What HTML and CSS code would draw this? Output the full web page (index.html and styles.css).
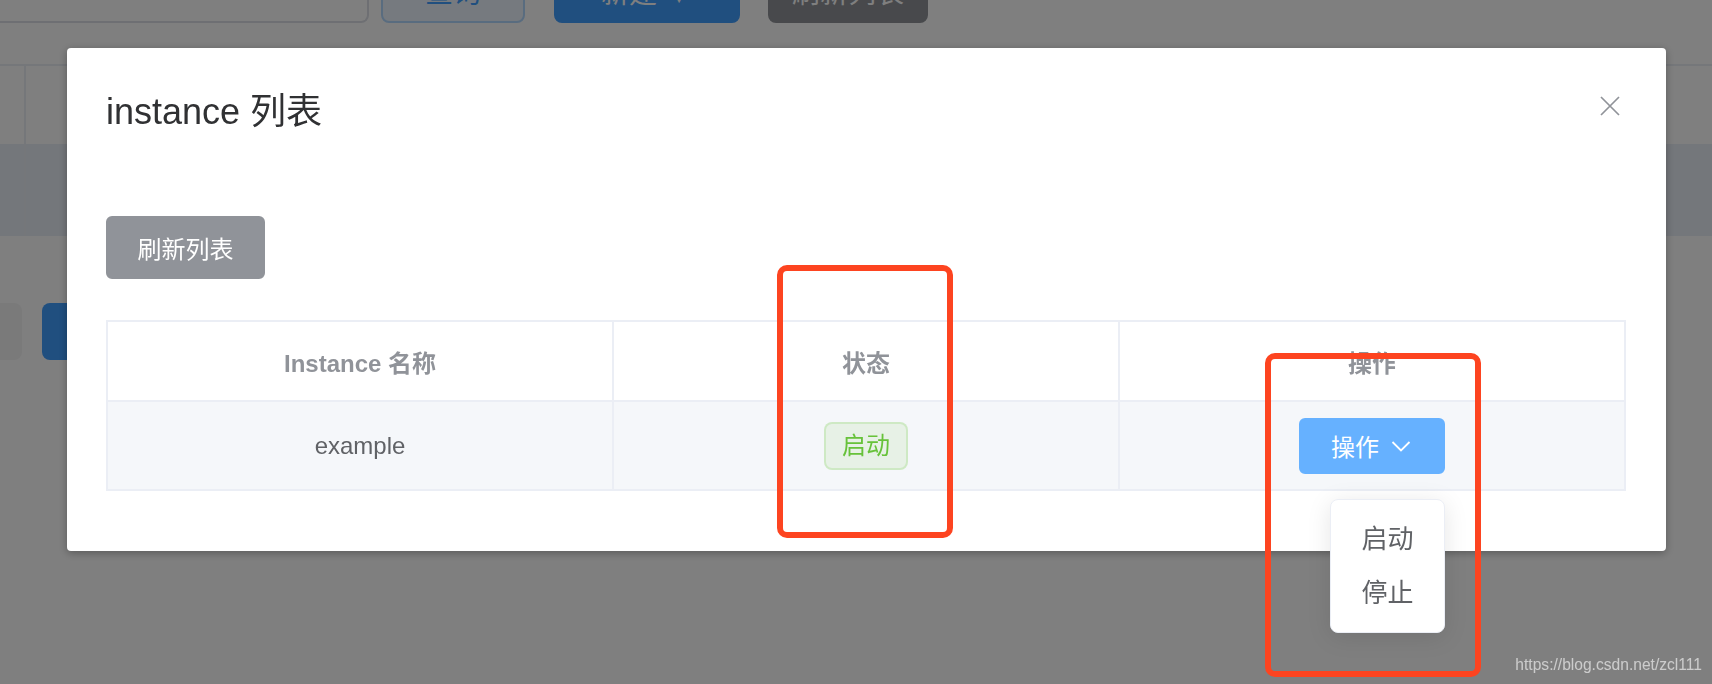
FILE: index.html
```html
<!DOCTYPE html>
<html lang="zh-CN">
<head>
<meta charset="utf-8">
<title>instance 列表</title>
<link rel="stylesheet" href="styles.css">
</head>
<body>
<div class="page">
  <div class="toolbar">
    <div class="input"><span class="placeholder">Server IP</span></div>
    <button class="btn btn-plain">查询</button>
    <button class="btn btn-primary">新建 ∨</button>
    <button class="btn btn-info">刷新列表</button>
  </div>
  <div class="bg-table">
    <div class="bg-line"><div class="bg-sel"></div><div class="bg-rest"></div></div>
    <div class="bg-line bg-current"><div class="bg-sel"></div><div class="bg-rest"></div></div>
  </div>
  <div class="bg-actions">
    <span class="bg-btn bg-btn-gray"></span>
    <span class="bg-btn bg-btn-blue"></span>
  </div>
</div>

<div class="overlay">
  <div class="dialog">
    <div class="dialog-header">
      <span class="dialog-title">instance 列表</span>
      <button class="dialog-close" aria-label="close">
        <svg width="20" height="20" viewBox="0 0 20 20"><path d="M1 1L19 19M19 1L1 19" stroke="#909399" stroke-width="1.7" fill="none"/></svg>
      </button>
    </div>
    <div class="dialog-body">
      <button class="btn-refresh">刷新列表</button>
      <div class="grid">
        <div class="cell head">Instance 名称</div>
        <div class="cell head">状态</div>
        <div class="cell head">操作</div>
        <div class="cell body-cell">example</div>
        <div class="cell body-cell"><span class="tag">启动</span></div>
        <div class="cell body-cell">
          <div class="dropdown">
            <button class="op-btn">操作<svg class="arrow" width="24" height="24" viewBox="0 0 24 24"><path d="M3.5 8L12 16.5L20.5 8" stroke="#fff" stroke-width="1.8" fill="none"/></svg></button>
            <ul class="menu">
              <li>启动</li>
              <li>停止</li>
            </ul>
          </div>
        </div>
      </div>
    </div>
  </div>
  <div class="mark mark-status"></div>
  <div class="mark mark-action"></div>
  <div class="watermark">https://blog.csdn.net/zcl111</div>
</div>
</body>
</html>
```

FILE: styles.css
```css
* { box-sizing: border-box; }
html, body { margin: 0; padding: 0; }
body {
  width: 1712px;
  height: 684px;
  overflow: hidden;
  background: #ffffff;
  font-family: "Liberation Sans", "Noto Sans CJK SC", sans-serif;
}

/* ---------- background page ---------- */
.toolbar {
  display: flex;
  align-items: center;
  height: 64px;
  margin-top: -41px;
}
.input {
  width: 369px;
  height: 64px;
  border: 2px solid #dcdfe6;
  border-left: none;
  border-radius: 0 8px 8px 0;
  display: flex;
  align-items: center;
  padding-left: 8px;
  font-size: 28px;
  color: #c0c4cc;
}
.btn {
  height: 64px;
  border-radius: 8px;
  font-size: 28px;
  font-family: inherit;
  border: 2px solid transparent;
  padding: 0;
}
.btn-plain { margin-left: 12px; width: 144px; background: #ecf5ff; border-color: #b3d8ff; color: #409eff; }
.btn-primary { margin-left: 29px; width: 186px; background: #409eff; border-color: #409eff; color: #fff; }
.btn-info { margin-left: 28px; width: 160px; background: #909399; border-color: #909399; color: #fff; }

.bg-table {
  margin-top: 41px;
  border-top: 2px solid #ebeef5;
}
.bg-line { display: flex; height: 78px; }
.bg-current { height: 92px; background: #e9eef6; }
.bg-sel { width: 26px; border-right: 2px solid #ebeef5; }
.bg-rest { flex: 1; }

.bg-actions {
  display: flex;
  margin-top: 67px;
  height: 57px;
}
.bg-btn { display: block; height: 57px; }
.bg-btn-gray { width: 22px; background: #f4f4f5; border-radius: 0 8px 8px 0; }
.bg-btn-blue { width: 200px; margin-left: 20px; background: #409eff; border-radius: 8px; }

/* ---------- overlay + dialog ---------- */
.overlay {
  position: fixed;
  inset: 0;
  background: rgba(0, 0, 0, 0.5);
  padding: 48px 0 0 67px;
}
.dialog {
  position: relative;
  width: 1599px;
  background: #fff;
  border-radius: 4px;
  box-shadow: 0 2px 8px rgba(0, 0, 0, 0.3);
}
.dialog-header {
  position: relative;
  padding: 40px 40px 20px 39px;
}
.dialog-title {
  display: block;
  font-size: 36px;
  line-height: 48px;
  color: #303133;
}
.dialog-close {
  position: absolute;
  top: 42px;
  right: 40px;
  width: 32px;
  height: 32px;
  padding: 0;
  border: none;
  background: transparent;
  display: flex;
  align-items: center;
  justify-content: center;
}
.dialog-body {
  padding: 60px 40px 60px 39px;
}
.btn-refresh {
  display: block;
  width: 159px;
  height: 63px;
  padding: 0;
  background: #909399;
  border: 2px solid #909399;
  border-radius: 6px;
  color: #fff;
  font-family: inherit;
  font-size: 24px;
}

.grid {
  margin-top: 41px;
  width: 1520px;
  display: grid;
  grid-template-columns: repeat(3, 1fr);
  border-top: 2px solid #ebeef5;
  border-left: 2px solid #ebeef5;
}
.cell {
  display: flex;
  align-items: center;
  justify-content: center;
  border-right: 2px solid #ebeef5;
  border-bottom: 2px solid #ebeef5;
  font-size: 24px;
  color: #606266;
}
.head {
  height: 80px;
  color: #909399;
  font-weight: bold;
}
.body-cell {
  height: 89px;
  background: #f5f7fa;
}

.tag {
  display: inline-block;
  height: 48px;
  line-height: 44px;
  padding: 0 16px;
  border: 2px solid rgba(103, 194, 58, 0.2);
  background: rgba(103, 194, 58, 0.1);
  border-radius: 8px;
  color: #67c23a;
  font-size: 24px;
}

.dropdown {
  position: relative;
  display: inline-block;
}
.op-btn {
  display: flex;
  align-items: center;
  height: 56px;
  padding: 0 30px;
  background: #66b1ff;
  border: 2px solid #66b1ff;
  border-radius: 6px;
  color: #fff;
  font-family: inherit;
  font-size: 24px;
}
.arrow { margin-left: 10px; }
.menu {
  position: absolute;
  top: 81px;
  right: 0;
  width: 115px;
  margin: 0;
  padding: 12px 0;
  list-style: none;
  background: #fff;
  border: 1px solid #ebeef5;
  border-radius: 8px;
  box-shadow: 0 4px 24px rgba(0, 0, 0, 0.1);
}
.menu li {
  line-height: 54px;
  padding: 0 30px;
  font-size: 26px;
  color: #606266;
  text-align: center;
  white-space: nowrap;
}

/* ---------- annotations ---------- */
.mark {
  position: absolute;
  border: 6px solid #fd4420;
  border-radius: 10px;
}
.mark-status { left: 777px; top: 265px; width: 176px; height: 273px; }
.mark-action { left: 1265px; top: 353px; width: 216px; height: 324px; }

.watermark {
  position: absolute;
  right: 10px;
  top: 656px;
  font-family: "Liberation Sans", sans-serif;
  font-size: 15.6px;
  line-height: 18px;
  color: rgba(255, 255, 255, 0.6);
}
```
